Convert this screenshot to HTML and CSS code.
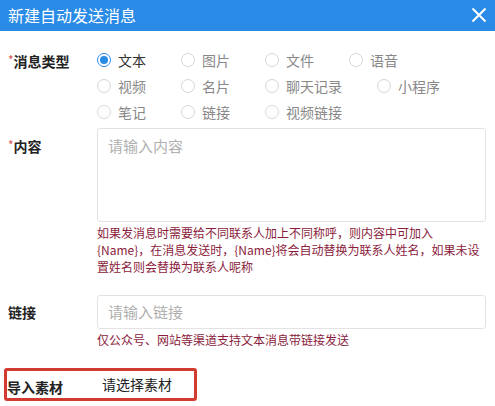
FILE: index.html
```html
<!DOCTYPE html>
<html lang="zh">
<head>
<meta charset="utf-8">
<link rel="stylesheet" href="styles.css">
</head>
<body>
<div class="dialog">
  <div class="header">
    <span class="title">新建自动发送消息</span>
    <svg class="close" width="16" height="16" viewBox="0 0 16 16"><path d="M1.5 1.5L14.5 14.5M14.5 1.5L1.5 14.5" stroke="#fff" stroke-width="2" fill="none"/></svg>
  </div>
  <div class="form">
    <div class="row">
      <div class="label short"><span class="req">*</span>消息类型</div>
      <div class="radios">
        <label class="radio checked"><span class="dot"></span>文本</label>
        <label class="radio"><span class="dot"></span>图片</label>
        <label class="radio"><span class="dot"></span>文件</label>
        <label class="radio"><span class="dot"></span>语音</label>
        <label class="radio"><span class="dot"></span>视频</label>
        <label class="radio"><span class="dot"></span>名片</label>
        <label class="radio"><span class="dot"></span>聊天记录</label>
        <label class="radio"><span class="dot"></span>小程序</label>
        <label class="radio"><span class="dot"></span>笔记</label>
        <label class="radio"><span class="dot"></span>链接</label>
        <label class="radio"><span class="dot"></span>视频链接</label>
      </div>
    </div>
    <div class="row r-content">
      <div class="label"><span class="req">*</span>内容</div>
      <div class="field">
        <div class="textarea">请输入内容</div>
        <div class="help">如果发消息时需要给不同联系人加上不同称呼，则内容中可加入<br>{Name}，在消息发送时，{Name}将会自动替换为联系人姓名，如果未设<br>置姓名则会替换为联系人呢称</div>
      </div>
    </div>
    <div class="row r-link">
      <div class="label">链接</div>
      <div class="field">
        <div class="input">请输入链接</div>
        <div class="help">仅公众号、网站等渠道支持文本消息带链接发送</div>
      </div>
    </div>
    <div class="material">
      <div class="m-label">导入素材</div>
      <div class="m-value">请选择素材</div>
    </div>
  </div>
</div>
</body>
</html>
```
FILE: styles.css
```css
html, body {
  margin: 0;
  padding: 0;
  background: #fff;
  font-family: "Noto Sans CJK SC", "Noto Sans", sans-serif;
}
.dialog {
  width: 495px;
  height: 406px;
  overflow: hidden;
}
.header {
  height: 31px;
  background: #2a8be6;
  display: flex;
  align-items: center;
  justify-content: space-between;
  padding: 0 8px 0 8px;
}
.title {
  color: #fff;
  font-size: 16px;
  line-height: 31px;
}
.close {
  display: block;
  margin-top: -1px;
}
.form {
  padding: 16px 9px 0 0;
}
.row {
  display: flex;
}
.label {
  width: 97px;
  flex: none;
  box-sizing: border-box;
  padding-left: 8px;
  font-size: 14px;
  font-weight: bold;
  color: #222;
  line-height: 34px;
}
.label.short {
  line-height: 26px;
}
.req {
  color: #d9534f;
  font-weight: normal;
  font-size: 12px;
  vertical-align: 2px;
}
.radios {
  display: flex;
  flex-wrap: wrap;
  width: 389px;
}
.radio {
  display: flex;
  align-items: center;
  height: 26px;
  margin-right: 35px;
  font-size: 14px;
  color: #888;
}
.radio.checked {
  color: #333;
}
.dot {
  width: 14px;
  height: 14px;
  box-sizing: border-box;
  border: 1px solid #d6d6d6;
  border-radius: 50%;
  margin-right: 7px;
  position: relative;
}
.radio.checked .dot {
  border-color: #2a8be6;
}
.radio.checked .dot::after {
  content: "";
  position: absolute;
  left: 2px;
  top: 2px;
  width: 8px;
  height: 8px;
  border-radius: 50%;
  background: #2a8be6;
}
.r-content {
  margin-top: 3px;
}
.field {
  width: 389px;
}
.textarea {
  height: 94px;
  box-sizing: border-box;
  border: 1px solid #e3e3e3;
  border-radius: 3px;
  padding: 6px 10px;
  font-size: 15px;
  line-height: 22px;
  color: #b0b0b0;
}
.help {
  margin-top: 2px;
  font-size: 12px;
  line-height: 17px;
  color: #8b1c3c;
}
.r-link {
  margin-top: 20px;
}
.input {
  height: 34px;
  box-sizing: border-box;
  border: 1px solid #e3e3e3;
  border-radius: 3px;
  padding: 0 10px;
  font-size: 15px;
  line-height: 32px;
  color: #b0b0b0;
}
.material {
  margin: 20px 0 0 4px;
  width: 193px;
  height: 33px;
  box-sizing: border-box;
  border: 3px solid #d23a2f;
  border-radius: 3px;
  display: flex;
  align-items: center;
}
.m-label {
  width: 95px;
  font-size: 14px;
  font-weight: bold;
  color: #222;
  margin-top: 5px;
}
.m-value {
  font-size: 14px;
  color: #222;
  margin-top: -1px;
}
```
